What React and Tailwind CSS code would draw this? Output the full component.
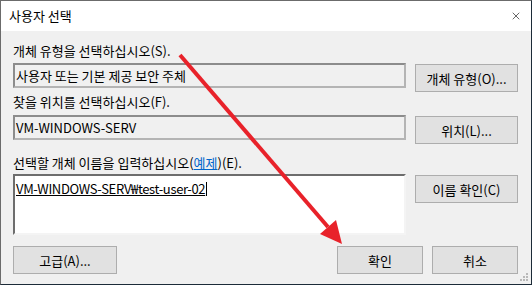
import { X } from "lucide-react";

const font = { fontFamily: '"Noto Sans CJK KR", "Noto Sans", sans-serif' };

const Button = ({ children, className = "" }) => (
  <button
    className={`h-[28px] border border-[#adadad] bg-[#e1e1e1] text-[13px] text-black leading-none ${className}`}
  >
    {children}
  </button>
);

const ReadOnlyBox = ({ children }) => (
  <div className="flex h-[25px] w-[393px] items-center border-2 border-[#8c8c8c] border-r-[#b4b4b4] border-b-[#b4b4b4] bg-[#f0f0f0] pl-[1px] text-[13px] text-black">
    {children}
  </div>
);

const Arrow = () => (
  <svg className="pointer-events-none absolute left-0 top-0" width="532" height="285">
    <line x1="179" y1="54" x2="327" y2="226" stroke="#e8222a" strokeWidth="4" />
    <polygon points="341,243 319,233 335,219" fill="#e8222a" />
  </svg>
);

export default function App() {
  return (
    <div
      className="relative flex h-[285px] w-[532px] flex-col border border-[#6b6b6b] border-r-[#1c2b38] border-b-[#1c2b38] bg-[#f0f0f0]"
      style={font}
    >
      <div className="flex h-[30px] items-center justify-between bg-white pl-[8px] pr-[9px]">
        <span className="text-[13px] text-black">사용자 선택</span>
        <X size={12} strokeWidth={1.2} className="text-black" />
      </div>

      <div className="flex flex-col pl-[12px]">
        <p className="mt-[12px] text-[13px] leading-[16px] text-black">개체 유형을 선택하십시오(S).</p>
        <div className="mt-[4px] flex items-start gap-[9px]">
          <ReadOnlyBox>사용자 또는 기본 제공 보안 주체</ReadOnlyBox>
          <Button className="mt-[1px] w-[103px]">개체 유형(O)...</Button>
        </div>

        <p className="mt-[2px] text-[13px] leading-[16px] text-black">찾을 위치를 선택하십시오(F).</p>
        <div className="mt-[5px] flex items-start gap-[9px]">
          <ReadOnlyBox>VM-WINDOWS-SERV</ReadOnlyBox>
          <Button className="mt-[1px] w-[103px]">위치(L)...</Button>
        </div>

        <p className="mt-[11px] text-[13px] leading-[16px] text-black">
          선택할 개체 이름을 입력하십시오(
          <span className="text-[#0066cc] underline">예제</span>
          )(E).
        </p>
        <div className="mt-[3px] flex items-start gap-[9px]">
          <div className="h-[61px] w-[393px] border-2 border-[#6d6d6d] border-r-[#f4f4f4] border-b-[#f4f4f4] bg-white pl-[1px] pt-[4px] text-[13px] leading-[16px] text-black">
            <span className="tracking-[-0.35px] underline">VM-WINDOWS-SERV₩test-user-02</span>
            <span className="ml-[1px] inline-block h-[14px] w-[1px] translate-y-[2px] bg-black" />
          </div>
          <Button className="mt-[1px] w-[103px]">이름 확인(C)</Button>
        </div>

        <div className="mt-[11px] flex items-center">
          <Button className="w-[104px]">고급(A)...</Button>
          <div className="flex-1" />
          <Button className="w-[86px]">확인</Button>
          <Button className="ml-[9px] mr-[13px] w-[86px]">취소</Button>
        </div>
      </div>

      <svg className="absolute bottom-[2px] right-[2px]" width="10" height="10">
        <rect x="7" y="1" width="2" height="2" fill="#b8b8b8" />
        <rect x="4" y="4" width="2" height="2" fill="#b8b8b8" />
        <rect x="7" y="4" width="2" height="2" fill="#b8b8b8" />
        <rect x="1" y="7" width="2" height="2" fill="#b8b8b8" />
        <rect x="4" y="7" width="2" height="2" fill="#b8b8b8" />
        <rect x="7" y="7" width="2" height="2" fill="#b8b8b8" />
      </svg>

      <Arrow />
    </div>
  );
}
